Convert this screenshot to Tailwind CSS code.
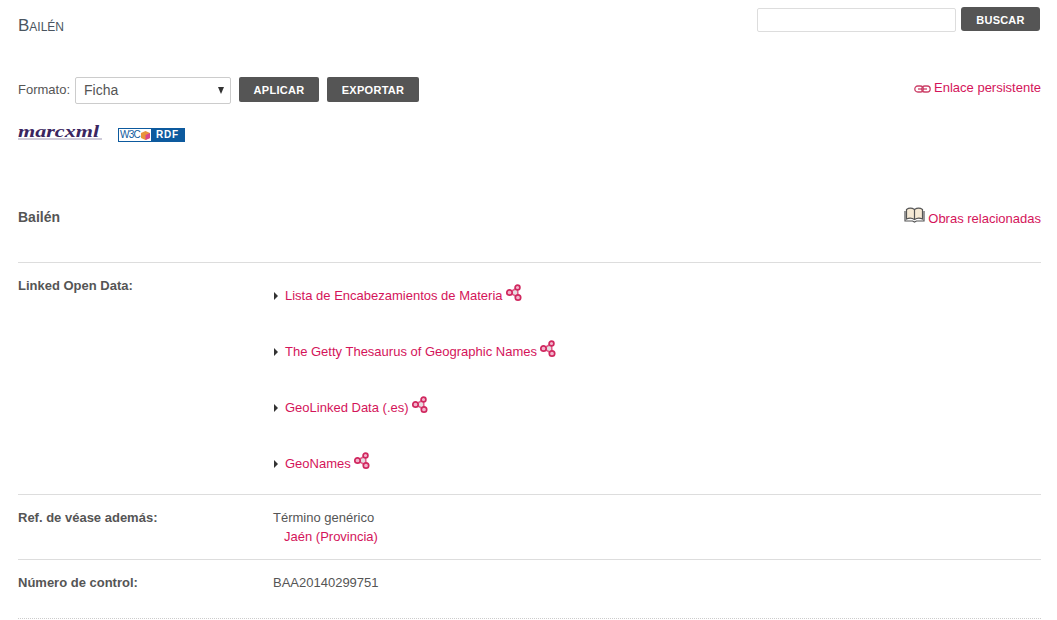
<!DOCTYPE html>
<html lang="es">
<head>
<meta charset="utf-8">
<title>Bailén</title>
<script src="https://cdn.jsdelivr.net/npm/@tailwindcss/browser@4"></script>
</head>
<body class="bg-white font-['Liberation_Sans',Arial,sans-serif] text-[13px] text-[#555] overflow-hidden">
<svg width="0" height="0" class="absolute">
  <defs>
    <symbol id="share" viewBox="0 0 16 18">
      <path d="M3.500 8.500 L11.500 3.500 L12 13.500 Z" stroke="#e0608c" stroke-width="1.6" fill="#e6dde1"/>
      <circle cx="3.500" cy="8.500" r="2.700" fill="#f3b4cc" stroke="#d0285f" stroke-width="1.700"/>
      <circle cx="11.500" cy="3.500" r="2.400" fill="#f3b4cc" stroke="#d0285f" stroke-width="1.700"/>
      <circle cx="12" cy="13.500" r="2.700" fill="#f3b4cc" stroke="#d0285f" stroke-width="1.700"/>
    </symbol>
  </defs>
</svg>
<div class="h-[620px] w-[1057px] pl-[18px] pr-[16px] flex flex-col">
  <header class="flex justify-between h-[77px] pt-[7px]">
    <h1 class="mt-[9px] text-[17px] leading-5 text-[#4a5560] [font-variant:small-caps]">Bailén</h1>
    <form class="flex items-start gap-[5px] pr-px">
      <input type="text" class="mt-px w-[199px] h-[24px] border border-[#ddd] rounded-[2px] bg-white">
      <button type="button" class="w-[79px] h-[24px] pt-[2px] bg-[#555] rounded-[3px] text-white text-[11px] font-bold tracking-[0.2px]">BUSCAR</button>
    </form>
  </header>
  <div class="flex justify-between items-start h-[40px]">
    <div class="flex items-start">
      <label class="mr-[5px] mt-[4px] leading-[18px]">Formato:</label>
      <div class="relative w-[156px] h-[27px] border border-[#ccc] rounded-[2px] flex items-center pl-[8px] text-[14px] mr-[8px]">
        Ficha
        <span class="absolute right-[6px] top-[9px] w-0 h-0 border-x-[3.5px] border-x-transparent border-t-[7px] border-t-[#333]"></span>
      </div>
      <button type="button" class="w-[80px] h-[25px] pt-px bg-[#555] rounded-[2px] text-white text-[11px] font-bold tracking-[0.3px] mr-[8px]">APLICAR</button>
      <button type="button" class="w-[92px] h-[25px] pt-px bg-[#555] rounded-[2px] text-white text-[11px] font-bold tracking-[0.3px]">EXPORTAR</button>
    </div>
    <a class="flex items-center gap-[3px] mt-px text-[#d4145a] leading-5">
      <svg width="17" height="8" viewBox="0 0 17 8" fill="none" stroke="#cc4068" stroke-width="1.300" class="mt-[2px]"><rect x=".8" y="1" width="8.500" height="6" rx="3"/><rect x="7.700" y="1" width="8.500" height="6" rx="3"/><path d="M4 4h9"/></svg>
      Enlace persistente
    </a>
  </div>
  <div class="flex items-start h-[24px] mt-[4px] gap-[16px]">
    <span class="block w-[84px] h-[15px] mt-[4px] border-b-2 border-[#cfcbd9]">
      <span class="block origin-left scale-x-[1.3] font-['Liberation_Serif',serif] italic font-bold text-[17px] leading-[14px] text-[#3a2560] whitespace-nowrap">marcxml</span>
    </span>
    <span class="flex w-[67px] h-[14px] mt-[7px] border border-[#0d5a9e] leading-[12px]">
      <span class="w-[32px] bg-white text-[#0d5a9e] text-[10px] tracking-[-0.8px] flex items-center pl-px gap-px">W3C<svg width="9" height="9" viewBox="0 0 9 9"><path d="M4.500 0 9 2v5L4.500 9 0 7V2z" fill="#e8943c"/><path d="M4.500 4 9 2v5L4.500 9z" fill="#d8478c"/></svg></span>
      <span class="flex-1 bg-[#0d5a9e] text-white text-[10px] font-bold text-center tracking-[0.8px]">RDF</span>
    </span>
  </div>
  <div class="flex justify-between items-start h-[117px] pt-[62px]">
    <h2 class="font-bold text-[14px] leading-5 text-[#555]">Bailén</h2>
    <a class="flex items-center gap-[3px] mt-[2px] text-[#d4145a] leading-5">
      <svg width="21" height="17" viewBox="0 0 21 17" class="-mt-[8px]" stroke="#555" stroke-width="1.200"><path d="M2.500 2.500C5 .8 8 1 10.500 2.500 13 1 16 .8 18.500 2.500V12C16 10.800 13 10.800 10.500 12.500 8 10.800 5 10.800 2.500 12Z" fill="#f5e9d4"/><path d="M10.500 2.500V12.500M1 4v10h7.500l2 1 2-1H20V4" fill="none"/></svg>
      Obras relacionadas
    </a>
  </div>
  <section class="flex border-t border-[#ddd] h-[232px]">
    <div class="w-[255px] pt-[13px] font-bold leading-5">Linked Open Data:</div>
    <ul class="pt-[5px]">
      <li class="h-[56px] flex items-center text-[#d4145a] pb-px"><span class="ml-px w-0 h-0 border-y-[4px] border-y-transparent border-l-[4px] border-l-[#333] mr-[7px]"></span>Lista de Encabezamientos de Materia<svg width="16" height="18" class="ml-[3px] -mt-[5px]"><use href="#share"/></svg></li>
      <li class="h-[56px] flex items-center text-[#d4145a] pb-px"><span class="ml-px w-0 h-0 border-y-[4px] border-y-transparent border-l-[4px] border-l-[#333] mr-[7px]"></span>The Getty Thesaurus of Geographic Names<svg width="16" height="18" class="ml-[3px] -mt-[5px]"><use href="#share"/></svg></li>
      <li class="h-[56px] flex items-center text-[#d4145a] pb-px"><span class="ml-px w-0 h-0 border-y-[4px] border-y-transparent border-l-[4px] border-l-[#333] mr-[7px]"></span>GeoLinked Data (.es)<svg width="16" height="18" class="ml-[3px] -mt-[5px]"><use href="#share"/></svg></li>
      <li class="h-[56px] flex items-center text-[#d4145a] pb-px"><span class="ml-px w-0 h-0 border-y-[4px] border-y-transparent border-l-[4px] border-l-[#333] mr-[7px]"></span>GeoNames<svg width="16" height="18" class="ml-[3px] -mt-[5px]"><use href="#share"/></svg></li>
    </ul>
  </section>
  <section class="flex border-t border-[#ddd] h-[65px]">
    <div class="w-[255px] pt-[13px] font-bold leading-5">Ref. de véase además:</div>
    <div class="pt-[13px] leading-[19px]">Término genérico<br><a class="pl-[11px] text-[#d4145a]">Jaén (Provincia)</a></div>
  </section>
  <section class="flex border-t border-[#ddd] h-[59px]">
    <div class="w-[255px] pt-[13px] font-bold leading-5">Número de control:</div>
    <div class="pt-[13px] leading-5">BAA20140299751</div>
  </section>
  <div class="border-t border-dotted border-[#ccc]"></div>
</div>
</body>
</html>
